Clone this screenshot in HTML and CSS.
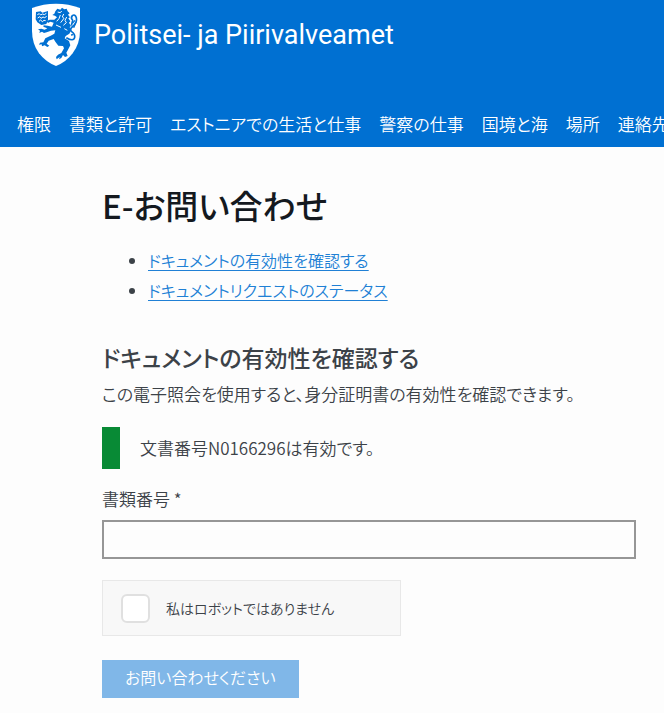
FILE: index.html
```
<!DOCTYPE html>
<html lang="ja">
<head>
    <meta charset="utf-8">
    <title>Politsei- ja Piirivalveamet</title>
    <link rel="stylesheet" href="styles.css">
</head>
<body>
    <header class="header">
        <a class="brand" href="#">
            <svg class="logo" viewBox="33 9 150 192" aria-hidden="true">
                <path fill="#fff" d="M36 24 Q70 11 108 11 Q146 11 180 24 V92 Q180 130 158 160 Q138 187 108 198 Q78 187 57 160 Q36 130 36 92 Z"/>
                <!-- small shield with three lions -->
                <path fill="#0070d2" d="M48 36 L62 34 L67 38 L84 33 L84 60 L79 72 L64 75 L52 67 L47 58 Z"/>
                <path fill="none" stroke="#fff" stroke-width="3" d="M52 44 L58 41 L62 45 L68 42 L73 44 L79 40 M53 54 L59 50 L63 55 L69 51 L74 53 L80 49 M57 64 L62 60 L67 65 L72 61 L77 62"/>
                <!-- lion -->
                <path fill="#0070d2" d="M106 34 L112 26 L121 29 L126 23 L133 28 L140 26 L143 34 L149 40 L144 44 L150 52 L145 55 L151 64 L147 68 L153 78 L149 81 L153 92 L148 101 L137 108 L134 115 L147 123 L151 136 L144 149 L139 158 L143 168 L135 171 L129 165 L124 174 L117 178 L119 171 L110 178 L108 171 L114 164 L124 159 L132 145 L129 138 L115 137 L106 125 L101 117 L86 122 L80 131 L88 137 L82 141 L74 136 L66 139 L65 133 L57 134 L60 128 L70 127 L76 115 L92 107 L103 101 L106 91 L93 92 L80 97 L72 99 L66 95 L58 99 L60 92 L54 88 L64 86 L74 89 L82 85 L70 80 L71 76 L83 77 L96 80 L101 68 L91 65 L84 69 L80 63 L89 59 L103 59 L111 52 L105 47 L97 45 L103 41 Z"/>
                <path fill="none" stroke="#fff" stroke-width="3" d="M113 36 L121 38 L125 33 M121 45 L117 56 L110 64 M131 42 L127 51 L132 55 L122 68 M140 51 L135 61 L139 68 L130 76 M108 75 L123 82 M133 86 L142 91"/>
                <!-- tail -->
                <path fill="none" stroke="#0070d2" stroke-width="5" d="M139 113 Q161 126 164 112 Q166 102 154 94 Q148 86 160 78 Q172 67 169 53 Q165 41 157 47 Q151 54 158 61 L154 77"/>
                <path fill="none" stroke="#0070d2" stroke-width="4" d="M165 61 L157 70 M168 66 L161 83 M153 105 L160 104"/>
            </svg>
            <span>Politsei- ja Piirivalveamet</span>
        </a>
        <nav class="menu">
            <a href="#">権限</a>
            <a href="#">書類と許可</a>
            <a href="#">エストニアでの生活と仕事</a>
            <a href="#">警察の仕事</a>
            <a href="#">国境と海</a>
            <a href="#">場所</a>
            <a href="#">連絡先</a>
        </nav>
    </header>

    <main class="content">
        <h1>E-お問い合わせ</h1>
        <ul class="links">
            <li><a href="#">ドキュメントの有効性を確認する</a></li>
            <li><a href="#">ドキュメントリクエストのステータス</a></li>
        </ul>

        <h2>ドキュメントの有効性を確認する</h2>
        <p class="intro">この電子照会を使用すると、身分証明書の有効性を確認できます。</p>
        <div class="message">文書番号N0166296は有効です。</div>

        <form>
            <label class="field-label" for="docNumber">書類番号 *</label>
            <input class="field" type="text" id="docNumber" name="docNumber" required>

            <div class="captcha">
                <input type="checkbox" id="robot" name="robot">
                <label for="robot">私はロボットではありません</label>
            </div>

            <button class="submit" type="submit">お問い合わせください</button>
        </form>
    </main>
</body>
</html>
```
FILE: styles.css
```
* {
    box-sizing: border-box;
}
body {
    margin: 0;
    background-color: #fdfdfd;
    color: #3c4248;
    font-family: "Noto Sans CJK JP", sans-serif;
    font-size: 17px;
    font-weight: 350;
    line-height: 30px;
    font-feature-settings: "palt";
}
.header {
    background-color: #0070d2;
    color: white;
    overflow: hidden;
}
.brand {
    display: flex;
    align-items: center;
    gap: 13px;
    padding: 3px 31px 0;
    color: white;
    font-family: Roboto, sans-serif;
    font-size: 27px;
    font-weight: 400;
    text-decoration: none;
    white-space: nowrap;
}
.logo {
    width: 50px;
    height: 64px;
    flex: none;
}
.menu {
    display: flex;
    gap: 18px;
    padding: 42px 17px 8px;
    white-space: nowrap;
}
.menu a {
    color: white;
    text-decoration: none;
}
.content {
    padding: 34px 28px 15px 102px;
}
h1 {
    margin: 0 0 16px;
    color: #14191f;
    font-size: 33px;
    font-weight: 500;
    line-height: 48px;
}
.links {
    margin: 0 0 34px;
    padding-left: 46px;
    font-size: 16px;
}
.links a {
    color: #2080d5;
    text-underline-offset: 3px;
}
h2 {
    margin: 0;
    font-size: 23px;
    font-weight: 500;
    line-height: 36px;
}
.intro {
    margin: 4px 0 18px;
}
.message {
    margin-bottom: 15px;
    padding: 6px 0 6px 20px;
    border-left: 18px solid #088a35;
}
.field-label {
    display: block;
}
.field {
    display: block;
    width: 100%;
    height: 39px;
    margin: 6px 0 21px;
    padding: 0 10px;
    border: 2px solid #969696;
    background-color: #fdfdfd;
    font: inherit;
}
.captcha {
    display: flex;
    align-items: center;
    gap: 16px;
    width: 299px;
    max-width: 100%;
    height: 56px;
    margin-bottom: 24px;
    padding: 0 18px;
    border: 1px solid #e8e8e8;
    background-color: #f8f8f8;
    font-size: 14px;
}
.captcha input {
    appearance: none;
    width: 29px;
    height: 29px;
    margin: 0;
    border: 2px solid #e0e0e0;
    border-radius: 6px;
    background-color: white;
}
.submit {
    display: block;
    height: 38px;
    padding: 0 23px 4px;
    border: none;
    background-color: #80b7e8;
    color: white;
    font: inherit;
    font-size: 16px;
    font-feature-settings: inherit;
}
```
